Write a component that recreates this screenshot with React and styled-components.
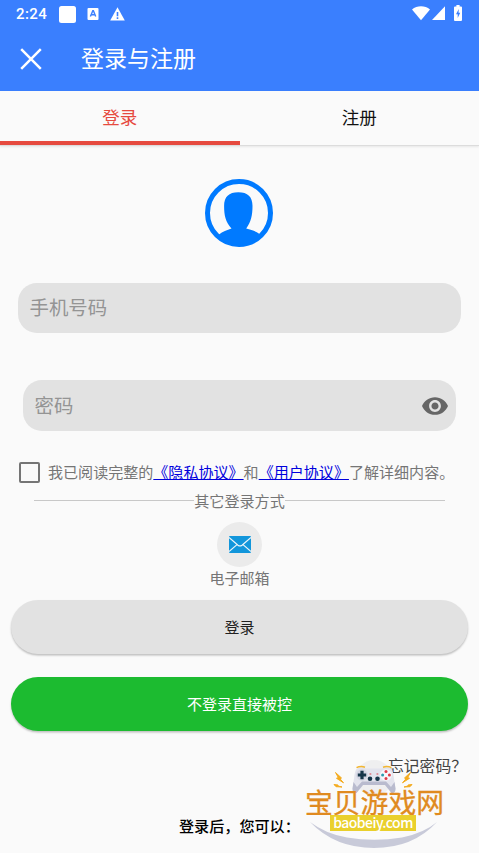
import styled, { createGlobalStyle } from "styled-components"

export default function App() {
    return (
        <>
            <GlobalStyle />
            <Screen>
                <Header>
                    <StatusBar>
                        <Time>2:24</Time>
                        <Square />
                        <svg width="12" height="12" viewBox="0 0 12 12">
                            <rect x="0.5" width="11" height="12" rx="1" fill="#fff" />
                            <path d="M3.4 8.6 5.8 2.8h.6l2.3 5.8M4.3 6.8h3.4" fill="none" stroke="#3a7ffe" strokeWidth="1.4" />
                        </svg>
                        <svg width="15" height="14" viewBox="0 0 15 14">
                            <path d="M7.5.3 14.8 13.5H.2Z" fill="#fff" />
                            <path d="M7.5 5v4.2M7.5 10.2v1.7" stroke="#3a7ffe" strokeWidth="1.6" />
                        </svg>
                        <Signals>
                            <svg width="18" height="15" viewBox="0 0 18 15">
                                <path d="M0 3.4C5-.9 13-.9 18 3.4L9 14.3Z" fill="#fff" />
                            </svg>
                            <svg width="13" height="14" viewBox="0 0 13 14">
                                <path d="M13 .3V14H0Z" fill="#fff" />
                            </svg>
                            <Battery width="8" height="16" viewBox="0 0 8 16">
                                <path d="M2.4 0h3.2v1.6H7q1 0 1 1V15q0 1-1 1H1q-1 0-1-1V2.6q0-1 1-1h1.4Z" fill="#fff" />
                                <path d="M4.8 4 2 9.2h1.7V13L6.2 7.8H4.5Z" fill="#3a7ffe" />
                            </Battery>
                        </Signals>
                    </StatusBar>

                    <TitleBar>
                        <svg width="22" height="22" viewBox="0 0 22 22">
                            <path d="M1.2 1.2 20.8 20.8M20.8 1.2 1.2 20.8" stroke="#fff" strokeWidth="2.5" />
                        </svg>
                        <Title>登录与注册</Title>
                    </TitleBar>
                </Header>

                <Tabs>
                    <Tab $active>登录</Tab>
                    <Tab>注册</Tab>
                </Tabs>

                <Avatar width="68" height="68" viewBox="0 0 68 68">
                    <circle cx="34" cy="34" r="31.5" fill="#fafafa" stroke="#007aff" strokeWidth="5" />
                    <path
                        d="M33.3 13.3c9.500 0 14.200 4.700 14.200 13.500 0 10-1.500 16-6.300 22.700 5.300 1.500 9.500 2.500 13.300 5.500Q46 66 34 66T14 55.500c3.500-3 8-4.500 12.500-6C20.500 43 19.100 36.500 19.100 26.800c0-8.800 4.700-13.500 14.200-13.500Z"
                        fill="#007aff"
                    />
                </Avatar>

                <Form>
                    <Field $inset={18}>
                        <Placeholder>手机号码</Placeholder>
                    </Field>
                    <Field $inset={23}>
                        <Placeholder>密码</Placeholder>
                        <Eye width="26" height="18" viewBox="1 4.5 22 15">
                            <path
                                d="M12 4.5C7 4.5 2.73 7.61 1 12c1.73 4.39 6 7.5 11 7.5s9.27-3.11 11-7.5c-1.73-4.39-6-7.5-11-7.5zM12 17c-2.76 0-5-2.24-5-5s2.24-5 5-5 5 2.24 5 5-2.24 5-5 5zm0-8c-1.66 0-3 1.34-3 3s1.34 3 3 3 3-1.34 3-3-1.34-3-3-3z"
                                fill="#666"
                            />
                        </Eye>
                    </Field>
                </Form>

                <Agreement>
                    <Checkbox />
                    <p>
                        我已阅读完整的<a>《隐私协议》</a>和<a>《用户协议》</a>了解详细内容。
                    </p>
                </Agreement>

                <Divider>
                    <span>其它登录方式</span>
                </Divider>

                <MailLogin>
                    <MailCircle>
                        <svg width="22" height="17" viewBox="0 0 22 17">
                            <rect width="22" height="17" rx="1" fill="#1296db" />
                            <path d="M0 1.5 9 9.2Q11 10.7 13 9.2L22 1.5M0 15.5 8 8.6M22 15.5 14 8.6" fill="none" stroke="#ebf5fa" strokeWidth="1.2" />
                        </svg>
                    </MailCircle>
                    <span>电子邮箱</span>
                </MailLogin>

                <Buttons>
                    <Button>登录</Button>
                    <Button $green>不登录直接被控</Button>
                </Buttons>

                <Forgot>忘记密码？</Forgot>
                <Benefits>登录后，您可以：</Benefits>

                <SiteLogo />
            </Screen>
        </>
    )
}

function SiteLogo() {
    return (
        <Watermark>
            <LogoArt width="150" height="95" viewBox="0 0 150 95">
                <circle cx="73" cy="20" r="18" fill="#ececee" opacity="0.8" />
                <path d="M9 64Q25 76 46 79.5 73 84 101 79.5 123 75 136 64 112 90 73 90T9 64Z" fill="#c8cad9" />

                <path
                    d="M34.5 14.5l6 5.5-1.5.8 3.5 4-7-4.5 1.8-.8ZM33 26.5l4 .5v1l4 1-6-.3ZM109.5 14.5l-6 5.5 1.5.8-3.5 4 7-4.5-1.8-.8ZM111 26.5l-4 .5v1l-4 1 6-.3Z"
                    fill="#f4ac20"
                    stroke="#f4ac20"
                    strokeWidth="1"
                />

                {/* gamepad */}
                <path
                    d="M56 10.5q5-2.5 9 0h16q4-2.5 9 0c2 2 2.5 6 3 10l1.5 10q0 5-4 4.5L84 27H62l-6.5 8q-4 .5-4-4.5L53 20.5c.5-4 1-8 3-10Z"
                    fill="#e3e4ed"
                />
                <path d="M52.5 24 51.5 30.5q0 5 4 4.5L62 27h22l6.5 8q4 .5 4-4.5L93.5 24 90 29l-5-5.5H61L56 29Z" fill="#b9bbce" />
                <path d="M55.5 9.7q4-2 8.5-.5M82 9.2q4.5-1.5 8.5.5" fill="none" stroke="#f2b632" strokeWidth="1.5" />
                <circle cx="61" cy="17" r="5.8" fill="#d3d5e2" />
                <path d="M61 12.8v8.4M56.8 17h8.4" stroke="#17374a" strokeWidth="3.2" />
                <circle cx="85" cy="17" r="5.8" fill="#f7f7fb" />
                <circle cx="85" cy="13.6" r="1.5" fill="#df3c48" />
                <circle cx="85" cy="20.4" r="1.5" fill="#df3c48" />
                <circle cx="81.6" cy="17" r="1.5" fill="#2a9cad" />
                <circle cx="88.4" cy="17" r="1.5" fill="#df3c48" />
                <circle cx="69" cy="20.8" r="2.3" fill="#17374a" />
                <circle cx="76.5" cy="20.8" r="2.3" fill="#17374a" />
                <path d="M68.5 16h1.8M75.5 16h1.8" stroke="#df3c48" strokeWidth="1.2" />
            </LogoArt>
            <LogoName>宝贝游戏网</LogoName>
            <LogoUrl>baobeiy.com</LogoUrl>
        </Watermark>
    )
}


const GlobalStyle = createGlobalStyle`
    * {
        box-sizing: border-box;
    }

    body {
        margin: 0;
        font-family: "Noto Sans CJK SC", sans-serif;
        background-color: #fafafa;
    }

    svg {
        display: block;
        flex-shrink: 0;
    }
`

const Screen = styled.div`
    position: relative;
    width: 479px;
    height: 853px;
    overflow: hidden;

    display: flex;
    flex-direction: column;

    background-color: #fafafa;
`

const Header = styled.header`
    height: 90.5px;
    flex-shrink: 0;

    color: #ffffff;
    background-color: #3a7ffe;
`

const StatusBar = styled.div`
    height: 28px;
    padding: 0 16px;

    display: flex;
    align-items: center;
    gap: 11px;
`

const Time = styled.span`
    width: 32px;

    font-family: Roboto, sans-serif;
    font-weight: 500;
    font-size: 15px;
    letter-spacing: 0.4px;
`

const Square = styled.div`
    width: 17px;
    height: 17px;

    border-radius: 2.5px;
    background-color: #ffffff;
`

const Signals = styled.div`
    height: 28px;
    padding-bottom: 2px;
    margin-left: auto;

    display: flex;
    align-items: center;
    gap: 2px;
`

const Battery = styled.svg`
    margin: 0 1px 0 7px;
`

const TitleBar = styled.div`
    height: 62px;
    padding-left: 20px;

    display: flex;
    align-items: center;
    gap: 39px;
`

const Title = styled.h1`
    margin: 0;
    padding-bottom: 4px;

    font-weight: 400;
    font-size: 23px;
    line-height: 34px;
`

const Tabs = styled.nav`
    height: 55px;
    flex-shrink: 0;

    display: flex;

    border-bottom: 1px solid #dcdcdc;
    box-shadow: 0 1px 2px rgba(0, 0, 0, 0.08);
`

const Tab = styled.div`
    flex: 1;
    padding-top: 1px;

    display: flex;
    justify-content: center;
    align-items: center;

    font-size: 17.5px;

    color: ${({ $active }) => ($active ? "#e64a3f" : "#111111")};
    border-bottom: 4px solid ${({ $active }) => ($active ? "#e64a3f" : "transparent")};
`

const Avatar = styled.svg`
    margin: 33px auto 0 205px;
`

const Form = styled.div`
    margin-top: 36px;

    display: flex;
    flex-direction: column;
    gap: 47px;
`

const Field = styled.div`
    height: 50.5px;
    margin: 0 ${({ $inset }) => $inset}px;
    padding: 0 8px 0 11.5px;

    display: flex;
    justify-content: space-between;
    align-items: center;

    background-color: #e2e2e2;
    border-radius: 19px;
`

const Placeholder = styled.span`
    padding-bottom: 2px;

    font-size: 19.4px;

    color: #949494;
`

const Eye = styled.svg`
    margin-top: 1px;
`

const Agreement = styled.div`
    height: 30px;
    margin-top: 26px;
    padding-left: 19px;

    display: flex;
    align-items: center;
    gap: 8px;

    p {
        margin: 0;

        font-size: 15.05px;
        white-space: nowrap;

        color: #757575;
    }

    a {
        color: #0000dd;
        text-decoration: underline;
    }
`

const Checkbox = styled.span`
    width: 21px;
    height: 21px;
    margin-top: 1px;
    flex-shrink: 0;

    border: 2px solid #757575;
    border-radius: 2px;
`

const Divider = styled.div`
    height: 24px;
    margin: 2px 34px 0;

    display: flex;
    align-items: center;

    font-size: 15.1px;

    color: #757575;

    span {
        padding-bottom: 2px;
    }

    &::before,
    &::after {
        content: "";
        height: 1px;
        flex: 1;

        background-color: #c8c8c8;
    }
`

const MailLogin = styled.div`
    margin-top: 9px;

    display: flex;
    flex-direction: column;
    align-items: center;

    font-size: 15px;
    line-height: 22px;

    color: #757575;
`

const MailCircle = styled.div`
    width: 45px;
    height: 45px;
    padding-top: 1px;

    display: flex;
    justify-content: center;
    align-items: center;

    border-radius: 50%;
    background-color: #ebebeb;
`

const Buttons = styled.div`
    margin: 11px 11px 0;

    display: flex;
    flex-direction: column;
    gap: 23px;
`

const Button = styled.button`
    height: 54px;
    padding: 0 0 1px;

    font-family: inherit;
    font-size: 15px;

    border: none;
    border-radius: 27px;

    color: ${({ $green }) => ($green ? "#ffffff" : "#212121")};
    background-color: ${({ $green }) => ($green ? "#1cbb30" : "#e2e2e2")};
    box-shadow: 0 1.5px 2px rgba(0, 0, 0, 0.24);
`

const Forgot = styled.div`
    height: 24px;
    margin: 23px 11px 0 388px;

    font-size: 15.8px;
    line-height: 24px;
    white-space: nowrap;

    color: #424242;
`

const Benefits = styled.div`
    margin-top: 35px;
    padding-left: 179px;

    font-weight: 500;
    font-size: 15.1px;
    line-height: 24px;

    color: #000000;
`

// sits over the bottom of the page
const Watermark = styled.div`
    position: absolute;
    left: 301px;
    top: 758px;

    width: 150px;
    height: 95px;
    padding-top: 30px;

    display: flex;
    flex-direction: column;
    align-items: flex-start;
`

const LogoArt = styled.svg`
    position: absolute;
    left: 0;
    top: 0;
`

const LogoName = styled.div`
    position: relative;
    height: 27px;
    margin-left: 4px;

    font-size: 27.8px;
    line-height: 27px;
    white-space: nowrap;

    color: #e08a20;
    -webkit-text-stroke: 0.3px #e08a20;
`

const LogoUrl = styled.div`
    position: relative;
    width: 86px;
    height: 16px;
    margin-left: 29px;

    font-weight: 500;
    font-size: 14px;
    line-height: 14px;
    letter-spacing: -0.55px;
    text-align: center;

    color: #ffffff;
    background-color: #ead02c;
`
